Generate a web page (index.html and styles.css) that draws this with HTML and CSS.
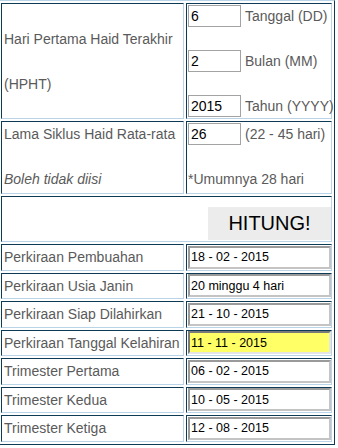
FILE: index.html
```html
<!DOCTYPE html>
<html lang="id">
<head>
    <meta charset="UTF-8">
    <meta name="viewport" content="width=device-width, initial-scale=1.0">
    <title>Kalkulator Kehamilan</title>
    <link rel="stylesheet" href="styles.css">
</head>
<body>

    <table class="calc">
        <!-- HPHT -->
        <tr class="row-hpht">
            <td class="label middle">
                <div class="stack">
                    <span>Hari Pertama Haid Terakhir</span>
                    <span>(HPHT)</span>
                </div>
            </td>
            <td class="field">
                <div class="stack">
                    <div class="field-line"><input class="num" type="text" value="6"><span>Tanggal (DD)</span></div>
                    <div class="field-line"><input class="num" type="text" value="2"><span>Bulan (MM)</span></div>
                    <div class="field-line"><input class="num" type="text" value="2015"><span>Tahun (YYYY)</span></div>
                </div>
            </td>
        </tr>

        <!-- Siklus -->
        <tr class="row-cycle">
            <td class="label">
                <div class="stack">
                    <span>Lama Siklus Haid Rata-rata</span>
                    <span class="note">Boleh tidak diisi</span>
                </div>
            </td>
            <td class="field">
                <div class="stack">
                    <div class="field-line"><input class="num" type="text" value="26"><span>(22 - 45 hari)</span></div>
                    <div class="field-line"><span>*Umumnya 28 hari</span></div>
                </div>
            </td>
        </tr>

        <tr class="row-submit">
            <td colspan="2" class="submit-cell">
                <button type="button" class="btn-hitung">HITUNG!</button>
            </td>
        </tr>

        <!-- Hasil -->
        <tr class="row-result">
            <td class="label">Perkiraan Pembuahan</td>
            <td class="field"><input class="result" type="text" value="18 - 02 - 2015"></td>
        </tr>
        <tr class="row-result">
            <td class="label">Perkiraan Usia Janin</td>
            <td class="field"><input class="result" type="text" value="20 minggu 4 hari"></td>
        </tr>
        <tr class="row-result">
            <td class="label">Perkiraan Siap Dilahirkan</td>
            <td class="field"><input class="result" type="text" value="21 - 10 - 2015"></td>
        </tr>
        <tr class="row-result">
            <td class="label">Perkiraan Tanggal Kelahiran</td>
            <td class="field"><input class="result highlight" type="text" value="11 - 11 - 2015"></td>
        </tr>
        <tr class="row-result">
            <td class="label">Trimester Pertama</td>
            <td class="field"><input class="result" type="text" value="06 - 02 - 2015"></td>
        </tr>
        <tr class="row-result">
            <td class="label">Trimester Kedua</td>
            <td class="field"><input class="result" type="text" value="10 - 05 - 2015"></td>
        </tr>
        <tr class="row-result">
            <td class="label">Trimester Ketiga</td>
            <td class="field"><input class="result" type="text" value="12 - 08 - 2015"></td>
        </tr>
    </table>

</body>
</html>
```

FILE: styles.css
```css
body {
    margin: 0;
    background: #fff;
    font-family: "Liberation Sans", Arial, sans-serif;
    font-size: 14px;
    color: #5a5a5a;
}

/* old style table border="1" look */
.calc {
    margin-left: -2px;
    width: 337px;
    table-layout: fixed;
    border-collapse: separate;
    border-spacing: 2px;
    border: 1px solid;
    border-color: #b9d4e6 #0d3a55 #0d3a55 #b9d4e6;
}
.calc td {
    border: 1px solid;
    border-color: #0d3a55 #b9d4e6 #b9d4e6 #0d3a55;
    padding: 1px;
    background: #fff;
    vertical-align: top;
}
.calc td.label {
    width: 177px;
    padding: 1px 2px;
}
.calc td.middle {
    vertical-align: middle;
}

.stack {
    display: flex;
    flex-direction: column;
    gap: 23px;
}
.stack > span {
    line-height: 22px;
    white-space: nowrap;
}
.note {
    font-style: italic;
}

.field-line {
    display: flex;
    align-items: center;
    gap: 4px;
    height: 22px;
    white-space: nowrap;
}

.num {
    box-sizing: border-box;
    width: 53px;
    height: 22px;
    margin: 0;
    padding: 0 2px;
    border: 1px solid #a3a3a3;
    font-family: "Liberation Sans", Arial, sans-serif;
    font-size: 14px;
    color: #000;
    background: #fff;
}

.row-hpht td {
    height: 112px;
}
.row-cycle td {
    height: 69px;
}

.calc td.submit-cell {
    height: 43px;
    padding: 0 0 1px 0;
    text-align: right;
    vertical-align: bottom;
}
.btn-hitung {
    width: 123px;
    height: 33px;
    margin: 0;
    padding: 0;
    border: 0;
    background: #ececec;
    font-family: "Liberation Sans", Arial, sans-serif;
    font-size: 20px;
    color: #000;
}

.row-result td {
    height: 22.5px;
    vertical-align: middle;
}
.calc .row-result td.field {
    padding: 0 1px;
}
.result {
    display: block;
    box-sizing: border-box;
    width: 143px;
    height: 23px;
    margin: 0;
    padding: 0 1px;
    border: 2px solid;
    border-color: #9a9a9a #c4c4c4 #c4c4c4 #9a9a9a;
    font-family: "Liberation Sans", Arial, sans-serif;
    font-size: 12.5px;
    color: #000;
    background: #fff;
}
.result.highlight {
    background: #ffff66;
    border-color: #7a7a7a #e4e4e4 #e4e4e4 #7a7a7a;
}
```
